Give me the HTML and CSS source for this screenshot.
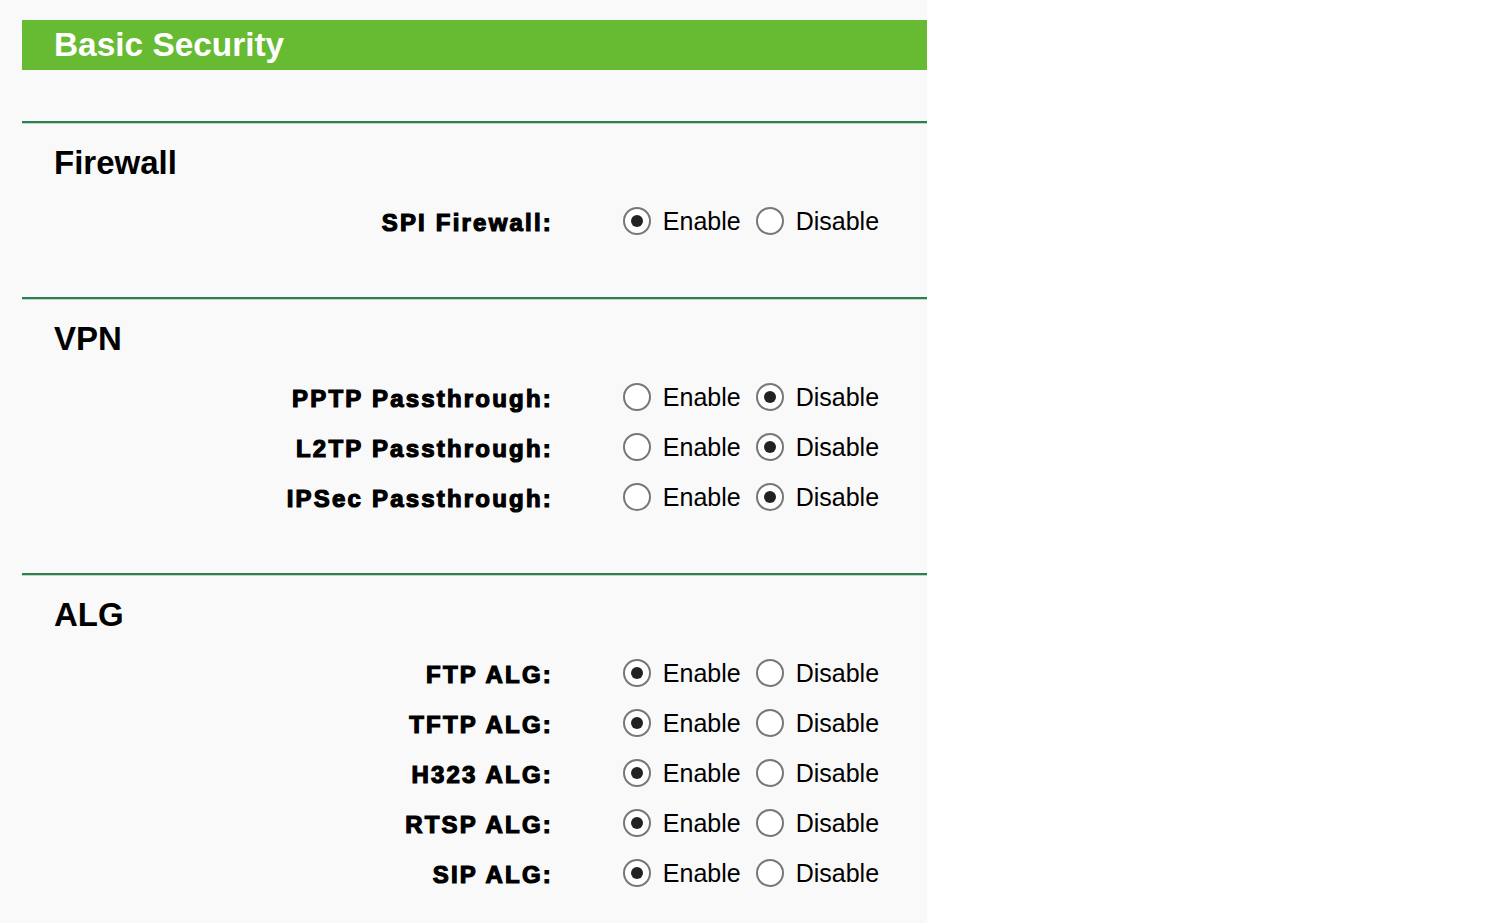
FILE: index.html
```html
<!DOCTYPE html>
<html>
<head>
<meta charset="utf-8">
<link rel="stylesheet" href="styles.css">
<title>Basic Security</title>
</head>
<body>
<div class="panel">
  <div class="titlebar">Basic Security</div>
  <div class="spacer"></div>

  <section class="section">
    <h2 class="heading">Firewall</h2>
    <div class="row">
      <div class="label">SPI Firewall:</div>
      <div class="opts">
        <label class="opt"><input type="radio" name="spi" checked><span>Enable</span></label>
        <label class="opt"><input type="radio" name="spi"><span>Disable</span></label>
      </div>
    </div>
  </section>

  <section class="section">
    <h2 class="heading">VPN</h2>
    <div class="row">
      <div class="label">PPTP Passthrough:</div>
      <div class="opts">
        <label class="opt"><input type="radio" name="pptp"><span>Enable</span></label>
        <label class="opt"><input type="radio" name="pptp" checked><span>Disable</span></label>
      </div>
    </div>
    <div class="row">
      <div class="label">L2TP Passthrough:</div>
      <div class="opts">
        <label class="opt"><input type="radio" name="l2tp"><span>Enable</span></label>
        <label class="opt"><input type="radio" name="l2tp" checked><span>Disable</span></label>
      </div>
    </div>
    <div class="row">
      <div class="label">IPSec Passthrough:</div>
      <div class="opts">
        <label class="opt"><input type="radio" name="ipsec"><span>Enable</span></label>
        <label class="opt"><input type="radio" name="ipsec" checked><span>Disable</span></label>
      </div>
    </div>
  </section>

  <section class="section">
    <h2 class="heading">ALG</h2>
    <div class="row">
      <div class="label">FTP ALG:</div>
      <div class="opts">
        <label class="opt"><input type="radio" name="ftp" checked><span>Enable</span></label>
        <label class="opt"><input type="radio" name="ftp"><span>Disable</span></label>
      </div>
    </div>
    <div class="row">
      <div class="label">TFTP ALG:</div>
      <div class="opts">
        <label class="opt"><input type="radio" name="tftp" checked><span>Enable</span></label>
        <label class="opt"><input type="radio" name="tftp"><span>Disable</span></label>
      </div>
    </div>
    <div class="row">
      <div class="label">H323 ALG:</div>
      <div class="opts">
        <label class="opt"><input type="radio" name="h323" checked><span>Enable</span></label>
        <label class="opt"><input type="radio" name="h323"><span>Disable</span></label>
      </div>
    </div>
    <div class="row">
      <div class="label">RTSP ALG:</div>
      <div class="opts">
        <label class="opt"><input type="radio" name="rtsp" checked><span>Enable</span></label>
        <label class="opt"><input type="radio" name="rtsp"><span>Disable</span></label>
      </div>
    </div>
    <div class="row">
      <div class="label">SIP ALG:</div>
      <div class="opts">
        <label class="opt"><input type="radio" name="sip" checked><span>Enable</span></label>
        <label class="opt"><input type="radio" name="sip"><span>Disable</span></label>
      </div>
    </div>
  </section>
</div>
</body>
</html>
```

FILE: styles.css
```css
html, body {
  margin: 0;
  padding: 0;
  background: #ffffff;
}

body {
  font-family: "Liberation Sans", Arial, sans-serif;
  color: #000;
}

.panel {
  width: 927px;
  min-height: 923px;
  background: #f9f9f9;
  padding: 20px 0 0 22px;
  box-sizing: border-box;
  overflow: hidden;
}

.titlebar {
  height: 50px;
  background: #66bb33;
  color: #fff;
  font-weight: bold;
  font-size: 33.4px;
  line-height: 49px;
  padding-left: 32px;
  box-sizing: border-box;
}

.spacer {
  height: 51px;
}

.section {
  border-top: 2px solid #2f7d50;
  padding-bottom: 51px;
}

.section::before {
  content: "";
  display: block;
  height: 1px;
  background: #b9d9c4;
}

.heading {
  margin: 19px 0 13px 0;
  padding-left: 32px;
  font-size: 33px;
  line-height: 40px;
  font-weight: bold;
}

.row {
  display: flex;
  align-items: center;
  height: 50px;
}

.label {
  width: 531px;
  text-align: right;
  font-weight: bold;
  font-size: 24px;
  letter-spacing: 2.2px;
  -webkit-text-stroke: 1.2px #000;
  margin-right: -2.2px;
  padding-top: 4px;
}

.opts {
  display: flex;
  align-items: center;
  margin-left: 72px;
}

.opt {
  display: flex;
  align-items: center;
  font-size: 25px;
  margin-right: 15px;
}

.opt span {
  margin-left: 12px;
}

.opt input {
  -webkit-appearance: none;
  appearance: none;
  width: 28px;
  height: 28px;
  margin: 0;
  border: 2px solid #777;
  border-radius: 50%;
  background: #fff;
  box-sizing: border-box;
  display: grid;
  place-items: center;
}

.opt input:checked::after {
  content: "";
  width: 12px;
  height: 12px;
  border-radius: 50%;
  background: #222;
}
```
